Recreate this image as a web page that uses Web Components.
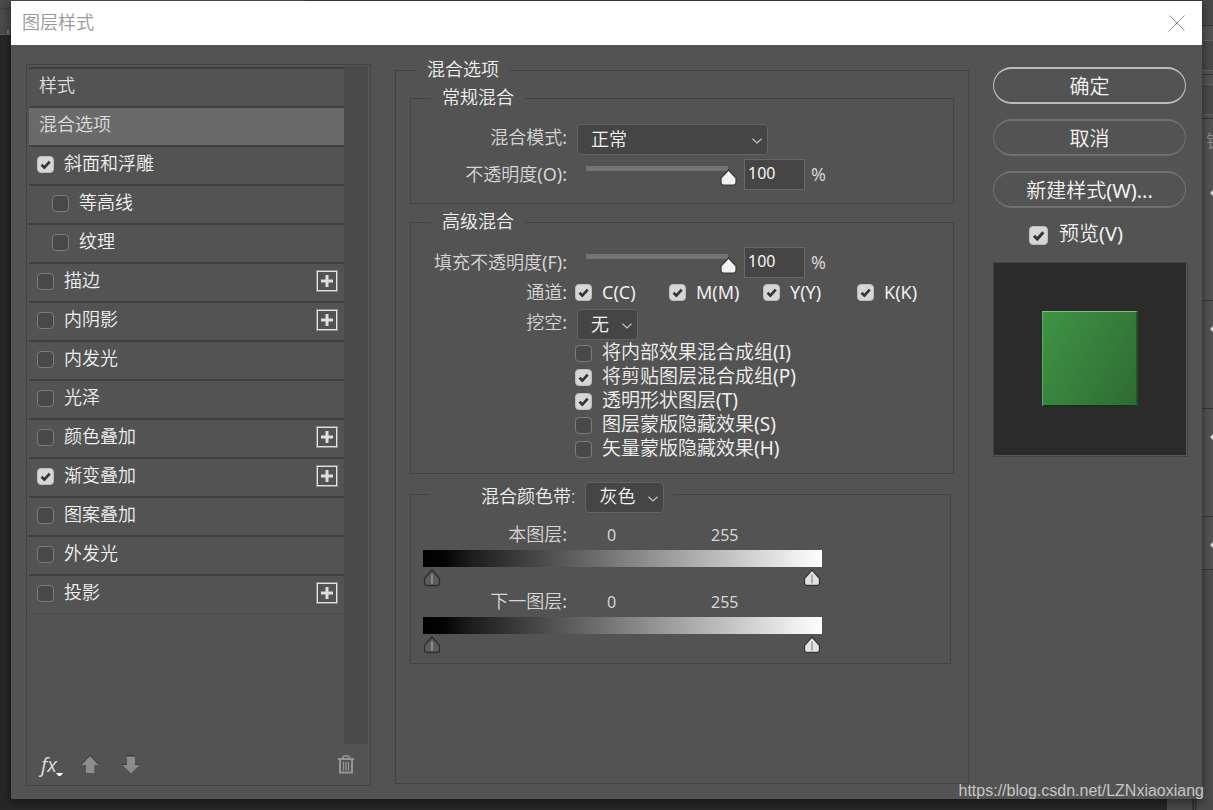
<!DOCTYPE html>
<html lang="zh-CN">
<head>
<meta charset="utf-8">
<title>图层样式</title>
<style>
  html, body { margin: 0; height: 100%; }
  body {
    font: 400 18px/24px "Noto Sans", "Noto Sans CJK SC DemiLight", "Noto Sans CJK SC", sans-serif;
    color: #f0f0f0;
    background: #272727;
    overflow: hidden;
  }
</style>
</head>
<body>
<layer-style-app></layer-style-app>

<script>
const define = (name, html, setup) => {
  const template = document.createElement('template');
  template.innerHTML = html;
  customElements.define(name, class extends HTMLElement {
    connectedCallback() {
      if (this.shadowRoot) return;
      const root = this.attachShadow({ mode: 'open' });
      root.append(template.content.cloneNode(true));
      if (setup) setup(this, root);
    }
  });
};

const chevron = `url("data:image/svg+xml,%3Csvg xmlns='http://www.w3.org/2000/svg' width='10' height='6'%3E%3Cpath d='M.5 .8L5 5L9.500 .8' fill='none' stroke='%23c4c4c4' stroke-width='1.200'/%3E%3C/svg%3E")`;
const thumb = `url("data:image/svg+xml,%3Csvg xmlns='http://www.w3.org/2000/svg' width='17' height='17'%3E%3Cpath d='M8.500 1L16 9V13.500Q16 16 13.500 16H3.500Q1 16 1 13.500V9Z' fill='%23f2f2f2' stroke='%23383838' stroke-width='1.200'/%3E%3C/svg%3E")`;
const tick = `url("data:image/svg+xml,%3Csvg xmlns='http://www.w3.org/2000/svg' viewBox='0 0 17 17'%3E%3Cpath d='M4 8.800L7.200 12L13.300 5.300' fill='none' stroke='%23333' stroke-width='3'/%3E%3C/svg%3E")`;

const selectCss = `
  select {
    appearance: none; box-sizing: border-box; height: 31px; margin: 0; padding: 0 0 2px 13px;
    font: inherit; font-weight: 350; color: #f4f4f4; border: 1px solid #636363; border-radius: 4px;
    background: #454545 ${chevron} no-repeat right 5px top 13px;
  }`;

/* Tick box with its caption */
define('check-box', `
  <style>
    :host { display: block; }
    label { display: flex; align-items: center; gap: var(--gap, 10px); }
    input {
      appearance: none; box-sizing: border-box; flex: none; margin: 0;
      width: var(--box, 17px); height: var(--box, 17px);
      border: 1px solid #7c7c7c; border-radius: 4px; background: #484848;
    }
    input:checked { border-color: #bdbdbd; background: #d6d6d6 ${tick} center / 100% no-repeat; }
    span { white-space: nowrap; padding-bottom: var(--lift, 2px); }
  </style>
  <label><input type="checkbox"><span><slot></slot></span></label>`,
  (host, root) => { root.querySelector('input').checked = host.hasAttribute('checked'); });

/* Row of the effects list */
define('effect-row', `
  <style>
    :host { display: flex; align-items: center; justify-content: space-between; box-sizing: border-box;
            height: 39px; padding: 0 6px 2px 8px; border-top: 2px solid #3f3f3f; font-weight: 350; }
    :host([nested]) { padding-left: 23px; }
    :host([plain]) { padding: 0 6px 6px 10px; color: #dedede; }
    :host([selected]) { background: #6a6a6a; }
    button { width: 22px; height: 22px; padding: 0; margin-bottom: 2px; border: 0; background: none; }
    svg { display: block; }
  </style>
  <slot></slot>`,
  (host, root) => {
    if (host.hasAttribute('addable')) {
      root.innerHTML += `<button type="button" aria-label="+"><svg width="22" height="22">
        <rect x=".5" y=".5" width="21" height="21" fill="none" stroke="#8f8f8f"/>
        <rect x="1.500" y="1.500" width="19" height="19" fill="none" stroke="#e2e2e2"/>
        <path d="M5 11H17M11 5V17" stroke="#dedede" stroke-width="3"/></svg></button>`;
    }
  });

/* Framed group with a heading in its border */
define('field-group', `
  <style>
    :host { display: flex; flex-direction: column; }
    fieldset { flex: 1; box-sizing: border-box; min-width: 0; margin: 0; border: 1px solid #434343;
               padding: var(--pad, 0); }
    legend { margin-left: var(--indent, 20px); padding: 0 11px 2px; line-height: 23px; font-weight: 350; }
    :host([wide]) legend { padding: 6px 9px 0 51px; margin-left: 19px; }
  </style>
  <fieldset><legend><slot name="legend"></slot></legend><slot></slot></fieldset>`);

const rowCss = `
  :host, .row { display: grid; grid-template-columns: 156px 1fr; column-gap: 10px; align-items: center; }
  .name { text-align: right; color: #d6d6d6; white-space: nowrap; padding-bottom: 2px; }`;

define('select-field', `
  <style>${rowCss}${selectCss}
    .name { padding-bottom: 6px; }
    select { justify-self: start; width: var(--width); }
  </style>
  <label class="name" for="s"></label><select id="s"><option></option></select>`,
  (host, root) => {
    root.querySelector('label').textContent = host.getAttribute('label');
    root.querySelector('option').textContent = host.getAttribute('value');
  });

define('slider-field', `
  <style>${rowCss}
    .control { display: flex; align-items: center; }
    input { font: inherit; box-sizing: border-box; height: 31px; margin: 0; }
    input[type=range] {
      appearance: none; width: 160px; margin-right: 7px;
      background: linear-gradient(#747474, #747474) 9px 7px / 142px 5px no-repeat;
    }
    input[type=range]::-webkit-slider-thumb {
      appearance: none; width: 17px; height: 17px; margin-top: 6px; border: 0; background: ${thumb};
    }
    input[type=text] {
      width: 61px; padding: 0 3px 3px; border: 1px solid #686868; background: #454545;
      color: #f4f4f4; font-size: 16px; margin-right: 6px;
    }
    .unit { color: #d6d6d6; padding-bottom: 2px; }
  </style>
  <label class="name" for="v"></label>
  <div class="control"><input type="range" min="0" max="100" value="100" aria-labelledby="v"><input id="v" type="text" value="100"><span class="unit">%</span></div>`,
  (host, root) => { root.querySelector('label').textContent = host.getAttribute('label'); });

/* Blend-if ramp: values, gradient bar and two handles */
const handle = (cls, fill, stroke, mark) => `
  <button type="button" class="${cls}" aria-label="${cls}"><svg width="18" height="18">
    <path d="M9 1L16.500 9.500V14Q16.500 16.500 14 16.500H4Q1.500 16.500 1.500 14V9.500Z" fill="${fill}" stroke="${stroke}" stroke-width="1.300"/>
    <path d="M9 5.500V14.500" stroke="${mark}" stroke-width="1.300"/></svg></button>`;
define('blend-ramp', `
  <style>${rowCss}
    :host { display: block; }
    .row { grid-template-columns: 156px 94px 1fr; height: 30px; }
    output { font-size: 16px; color: #d6d6d6; padding-left: 30px; }
    .track { max-width: 399px; margin-left: 12px; }
    .bar { height: 17px; background: linear-gradient(90deg, #000, #040404 5%, #1f1f1f 13%, #fff); }
    .handles { display: flex; justify-content: space-between; padding: 2px 1px 0 0; }
    button { border: 0; padding: 0; background: none; height: 18px; }
    svg { display: block; }
  </style>
  <div class="row"><span class="name"><slot></slot></span><output>0</output><output>255</output></div>
  <div class="track"><div class="bar"></div>
    <div class="handles">${handle('black', '#5c5c5c', '#2c2c2c', '#a8a8a8')}${handle('white', '#e2e2e2', '#383838', '#8c8c8c')}</div>
  </div>`);

define('pill-button', `
  <style>
    :host { display: block; }
    button { box-sizing: border-box; width: 100%; height: 37px; padding: 2px 0 0; border: solid #707070;
      border-width: 2px 1px; border-radius: 19px; background: none; color: #f4f4f4; font: inherit; font-size: 20px; }
    :host([primary]) button { border-color: #bcbcbc; }
  </style>
  <button type="button"><slot></slot></button>`);

/* Left column: the list of effects and its toolbar */
define('effects-panel', `
  <style>
    :host { display: flex; flex-direction: column; box-sizing: border-box; border: 1px solid #434343; padding: 1px 2px 0; }
    .scroller { flex: 1; display: grid; grid-template-columns: 1fr 24px; }
    .list { padding-top: 1px; --lift: 4px; }
    .end { height: 2px; background: #4e4e4e; }
    .bar { background: #4a4a4a; }
    footer { display: flex; align-items: center; height: 41px; padding: 0 14px 0 12px; }
    footer button { border: 0; padding: 0; background: none; display: block; }
    .fx { position: relative; width: 23px; height: 26px; margin-right: 17px; text-align: left;
      font: italic 20px/22px "Open Sans", sans-serif; color: #dcdcdc; }
    .fx svg { position: absolute; right: 1px; bottom: 1px; }
    .up { margin-right: 23px; }
    .bin { margin-left: auto; }
    svg { display: block; }
  </style>
  <div class="scroller">
    <div class="list">
      <effect-row plain>样式</effect-row>
      <effect-row plain selected>混合选项</effect-row>
      <effect-row><check-box checked>斜面和浮雕</check-box></effect-row>
      <effect-row nested><check-box>等高线</check-box></effect-row>
      <effect-row nested><check-box>纹理</check-box></effect-row>
      <effect-row addable><check-box>描边</check-box></effect-row>
      <effect-row addable><check-box>内阴影</check-box></effect-row>
      <effect-row><check-box>内发光</check-box></effect-row>
      <effect-row><check-box>光泽</check-box></effect-row>
      <effect-row addable><check-box>颜色叠加</check-box></effect-row>
      <effect-row addable><check-box checked>渐变叠加</check-box></effect-row>
      <effect-row><check-box>图案叠加</check-box></effect-row>
      <effect-row><check-box>外发光</check-box></effect-row>
      <effect-row addable><check-box>投影</check-box></effect-row>
      <div class="end"></div>
    </div>
    <div class="bar"></div>
  </div>
  <footer>
    <button type="button" class="fx">fx<svg width="7" height="4"><path d="M0 0H7L4.500 3H2.500Z" fill="#fff"/></svg></button>
    <button type="button" class="up" aria-label="上移"><svg width="18" height="19"><path d="M9 0L18 9H14V18H5V9H0Z" fill="#3c3c3c"/><path d="M9 1L17.500 10H13.500V18H5V10H.5Z" fill="#8c8c8c"/></svg></button>
    <button type="button" aria-label="下移"><svg width="18" height="19"><path d="M5 0H13V9H18L9 19L0 9H5Z" fill="#3c3c3c"/><path d="M5 1.500H13V10H17.500L9 18.500L.5 10H5Z" fill="#8c8c8c"/></svg></button>
    <button type="button" class="bin" aria-label="删除"><svg width="16" height="19" fill="none" stroke="#959595"><path d="M0 4H16" stroke-width="2"/><path d="M5 4V2Q5 1 6 1H10Q11 1 11 2V4" stroke-width="1.500"/><path d="M2 5V17.500H14V5" stroke-width="2"/><path d="M5.500 7V15.500M8 7V15.500M10.500 7V15.500" stroke-width="1.300"/></svg></button>
  </footer>`);

/* Middle column */
define('blending-options', `
  <style>
    :host { display: flex; flex-direction: column; }
    .outer { flex: 1; --pad: 3px 14px 0; --indent: 6px; }
    .outer > field-group { --indent: 20px; }
    .normal { --pad: 13px 0; margin-bottom: 6px; }
    .advanced { --pad: 12px 0; margin-bottom: 2px; }
    .blendif { --pad: 7px 0 9px; margin-right: 3px; }
    .normal select-field { --width: 191px; margin-bottom: 4px; }
    .advanced select-field { --width: 61px; }
    ${rowCss.replace(':host, ', '')}
    .row { height: 29px; margin-bottom: 2px; }
    .channels { display: grid; grid-template-columns: repeat(4, 94px); margin-left: -2px; }
    .checks { margin: 0 0 1px 164px; font-size: 19px; }
    .checks check-box { height: 24px; }
    .head { display: flex; align-items: center; gap: 10px; }
    .head label { padding-bottom: 2px; }
    .head select { width: 79px; }
    ${selectCss}
  </style>
  <field-group class="outer">
    <span slot="legend">混合选项</span>
    <field-group class="normal">
      <span slot="legend">常规混合</span>
      <select-field label="混合模式:" value="正常"></select-field>
      <slider-field label="不透明度(O):"></slider-field>
    </field-group>
    <field-group class="advanced">
      <span slot="legend">高级混合</span>
      <slider-field label="填充不透明度(F):"></slider-field>
      <div class="row"><span class="name">通道:</span>
        <div class="channels"><check-box checked>C(C)</check-box><check-box checked>M(M)</check-box><check-box checked>Y(Y)</check-box><check-box checked>K(K)</check-box></div></div>
      <select-field label="挖空:" value="无"></select-field>
      <div class="checks">
        <check-box>将内部效果混合成组(I)</check-box>
        <check-box checked>将剪贴图层混合成组(P)</check-box>
        <check-box checked>透明形状图层(T)</check-box>
        <check-box>图层蒙版隐藏效果(S)</check-box>
        <check-box>矢量蒙版隐藏效果(H)</check-box>
      </div>
    </field-group>
    <field-group class="blendif" wide>
      <div slot="legend" class="head"><label for="band">混合颜色带:</label><select id="band"><option>灰色</option></select></div>
      <blend-ramp>本图层:</blend-ramp>
      <blend-ramp>下一图层:</blend-ramp>
    </field-group>
  </field-group>`);

/* Right column */
define('action-panel', `
  <style>
    :host { display: flex; flex-direction: column; }
    .buttons { display: grid; gap: 15px; margin-right: 2px; }
    check-box { --box: 19px; --gap: 11px; height: 54px; display: flex; align-items: center; margin-left: 36px; font-size: 20px; }
    .preview { height: 192px; display: flex; align-items: center; justify-content: center;
      background: #2b2b2b; border: 1px solid #434343; box-shadow: inset -1px -1px #5a5a5a; padding: 0 1px 1px 0; }
    .swatch { box-sizing: border-box; width: 96px; height: 96px; border: solid; border-width: 1px 2px 2px 1px;
      border-color: #84bd86 #24532a #17321a #5fa963;
      background: linear-gradient(118deg, #3e9445, #2f6b33); }
  </style>
  <div class="buttons">
    <pill-button primary>确定</pill-button>
    <pill-button>取消</pill-button>
    <pill-button>新建样式(W)...</pill-button>
  </div>
  <check-box checked>预览(V)</check-box>
  <div class="preview"><div class="swatch"></div></div>`);

define('style-dialog', `
  <style>
    :host { display: flex; flex-direction: column; background: #535353; box-shadow: 0 2px 9px 1px rgba(0,0,0,.45); }
    header { display: flex; align-items: center; justify-content: space-between; height: 44px;
      padding: 0 17px 0 11px; background: #fff; color: #999; }
    h1 { margin: 0; font: inherit; font-weight: 350; padding-bottom: 2px; }
    header button { border: 0; padding: 0; background: none; }
    svg { display: block; }
    main { flex: 1; display: grid; grid-template-columns: 345px 1fr 195px; column-gap: 24px; padding: 13px 14px 13px 15px; }
    effects-panel { margin-top: 6px; }
    blending-options { margin-bottom: 2px; }
    action-panel { margin-top: 9px; }
  </style>
  <header><h1>图层样式</h1><button type="button" aria-label="关闭"><svg width="16" height="16"><path d="M.5 .5L15.500 15.500M15.500 .5L.5 15.500" stroke="#8c8c8c"/></svg></button></header>
  <main><effects-panel></effects-panel><blending-options></blending-options><action-panel></action-panel></main>`);

/* The slivers of the editor that show round the dialog */
define('editor-backdrop', `
  <style>
    :host { display: block; position: absolute; inset: 0; overflow: hidden; background: #272727; }
    svg { position: absolute; top: 0; }
    .left { left: 0; } .right { right: 0; }
    .top { position: absolute; inset: 0 0 auto; height: 1px; background: linear-gradient(90deg, #535353 306px, #404040 306px); }
    .lock { position: absolute; right: -11px; top: 129px; color: #8e8e8e; }
  </style>
  <div class="top"></div>
  <svg class="left" width="11" height="36"><rect width="11" height="34" fill="#4b4b4b"/><path d="M0 9H11" stroke="#383838"/><path d="M0 34.500H11" stroke="#5c5c5c"/><path d="M8 30V34" stroke="#777" stroke-width="2"/></svg>
  <svg class="right" width="46" height="810">
    <path d="M0 799H46V811H0Z" fill="#4a4a4a"/><path d="M26 799V810M28.500 799V810" stroke="#2e2e2e" stroke-width="1.500"/>
    <path d="M35 0H46V799H35Z" fill="#535353"/>
    <path d="M35 0H46V25H35ZM35 41H46V70H35ZM35 85H46V114H35Z" fill="#4a4a4a"/>
    <path d="M35 569H46V799H35Z" fill="#4e4e4e"/>
    <path d="M35 25.500H46M35 74.500H46M35 118.500H46M35 300.500H46M35 408.500H46M35 516.500H46M35 569.500H46" stroke="#363636"/>
    <path d="M35 40.500H46M35 70.500H46M35 84.500H46M35 114.500H46" stroke="#626262"/>
    <path d="M43 193l3-3v6ZM43 329l3-3v6ZM43 437l3-3v6ZM43 545l3-3v6Z" fill="#dedede"/>
  </svg>
  <span class="lock">锁</span>`);

define('layer-style-app', `
  <style>
    :host { display: flex; position: relative; box-sizing: border-box; min-height: 100vh; padding: 1px 11px 11px; overflow: hidden; }
    style-dialog { position: relative; flex: 1; }
    .mark { position: absolute; right: 9px; bottom: 9px; font: 400 16px/20px "Liberation Sans", sans-serif;
      color: #c6c6c6; text-decoration: none; }
  </style>
  <editor-backdrop></editor-backdrop>
  <style-dialog></style-dialog>
  <a class="mark" href="https://blog.csdn.net/LZNxiaoxiang">https://blog.csdn.net/LZNxiaoxiang</a>`);
</script>
</body>
</html>
